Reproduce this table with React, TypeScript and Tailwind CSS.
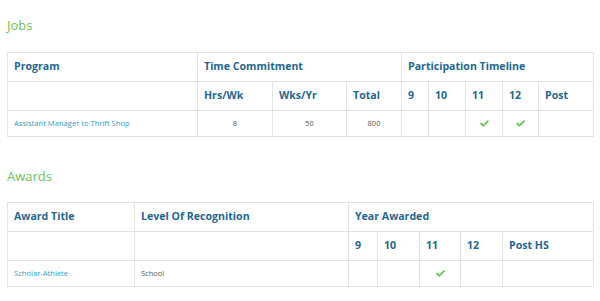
import { FaCheck } from 'react-icons/fa';

const font = { fontFamily: '"Open Sans", "Liberation Sans", sans-serif' };

const th = 'border border-[#e3e3e3] px-[6px] text-left align-middle text-[10.6px] font-bold text-[#1f6690] h-[29px]';
const cell = 'border border-[#e3e3e3] px-[6px] align-middle h-[26px]';
const td = cell + ' text-[7.5px] text-[#555]';
const link = cell + ' text-[7.6px] text-[#2c9cc2]';

function Check() {
  return <FaCheck className="mx-auto w-[9px] h-[9px] text-[#6abf5c]" />;
}

export default function App() {
  return (
    <div className="bg-white w-[600px] h-[301px] px-[7px] pt-[16px]" style={font}>
      {/* Jobs */}
      <h2 className="text-[13px] leading-[18px] text-[#6cbf5a] font-normal">Jobs</h2>
      <table className="mt-[18px] w-[586px] table-fixed border-collapse">
        <colgroup>
          <col className="w-[190px]" />
          <col className="w-[75px]" />
          <col className="w-[74px]" />
          <col className="w-[55px]" />
          <col className="w-[27px]" />
          <col className="w-[37px]" />
          <col className="w-[37px]" />
          <col className="w-[36px]" />
          <col className="w-[55px]" />
        </colgroup>
        <thead>
          <tr>
            <th className={th}>Program</th>
            <th className={th} colSpan={3}>Time Commitment</th>
            <th className={th} colSpan={5}>Participation Timeline</th>
          </tr>
          <tr>
            <th className={th}></th>
            <th className={th}>Hrs/Wk</th>
            <th className={th}>Wks/Yr</th>
            <th className={th}>Total</th>
            <th className={th}>9</th>
            <th className={th}>10</th>
            <th className={th}>11</th>
            <th className={th}>12</th>
            <th className={th}>Post</th>
          </tr>
        </thead>
        <tbody>
          <tr>
            <td className={link}>Assistant Manager to Thrift Shop</td>
            <td className={td + ' text-center'}>8</td>
            <td className={td + ' text-center'}>50</td>
            <td className={td + ' text-center'}>800</td>
            <td className={td}></td>
            <td className={td}></td>
            <td className={td}><Check /></td>
            <td className={td}><Check /></td>
            <td className={td}></td>
          </tr>
        </tbody>
      </table>

      {/* Awards */}
      <h2 className="mt-[30px] text-[13px] leading-[18px] text-[#6cbf5a] font-normal">Awards</h2>
      <table className="mt-[17px] w-[586px] table-fixed border-collapse">
        <colgroup>
          <col className="w-[127px]" />
          <col className="w-[214px]" />
          <col className="w-[29px]" />
          <col className="w-[42px]" />
          <col className="w-[41px]" />
          <col className="w-[42px]" />
          <col className="w-[91px]" />
        </colgroup>
        <thead>
          <tr>
            <th className={th}>Award Title</th>
            <th className={th}>Level Of Recognition</th>
            <th className={th} colSpan={5}>Year Awarded</th>
          </tr>
          <tr>
            <th className={th}></th>
            <th className={th}></th>
            <th className={th}>9</th>
            <th className={th}>10</th>
            <th className={th}>11</th>
            <th className={th}>12</th>
            <th className={th}>Post HS</th>
          </tr>
        </thead>
        <tbody>
          <tr>
            <td className={link}>Scholar-Athlete</td>
            <td className={td}>School</td>
            <td className={td}></td>
            <td className={td}></td>
            <td className={td}><Check /></td>
            <td className={td}></td>
            <td className={td}></td>
          </tr>
        </tbody>
      </table>
    </div>
  );
}
